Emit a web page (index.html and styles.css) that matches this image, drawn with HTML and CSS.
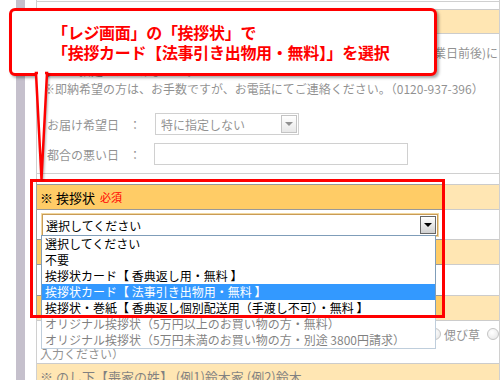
FILE: index.html
```html
<!DOCTYPE html>
<html lang="ja">
<head>
<meta charset="utf-8">
<link rel="stylesheet" href="styles.css">
</head>
<body>
<div class="page">
  <div class="rail"></div>
  <div class="panel">
    <div class="sec0"></div>
    <div class="hd hd0"></div>
    <div class="notes">
      <p class="l1"><span>※お届け日のご指定は、ご注文確定日から約1週間(土日祝を除く5営業日前後)に</span></p>
      <p>までご指定いただけません。</p>
      <p>※即納希望の方は、お手数ですが、お電話にてご連絡ください。（0120-937-396）</p>
      <div class="field field1">
        <span class="lbl">お届け希望日</span><span class="colon">：</span>
        <div class="fsel">特に指定しない<span class="btn btn-f"></span></div>
      </div>
      <div class="field field2">
        <span class="lbl">都合の悪い日</span><span class="colon">：</span>
        <div class="finput"></div>
      </div>
    </div>
    <div class="gap"></div>
    <div class="hd">※ 挨拶状<span class="req">必須</span></div>
    <div class="r1">
      <div class="select">選択してください<span class="btn"></span>
        <ul class="menu">
          <li>選択してください</li>
          <li>不要</li>
          <li>挨拶状カード【 香典返し用・無料 】</li>
          <li class="on">挨拶状カード【 法事引き出物用・無料 】</li>
          <li>挨拶状・巻紙【 香典返し個別配送用（手渡し不可）・無料 】</li>
          <li>オリジナル挨拶状（5万円以上のお買い物の方・無料）</li>
          <li>オリジナル挨拶状（5万円未満のお買い物の方・別途 3800円請求）</li>
        </ul>
      </div>
    </div>
    <div class="hd"></div>
    <div class="r2"></div>
    <div class="hd"></div>
    <div class="r3">
      <div class="radios"><span class="rad"></span><span class="rlbl">偲び草</span><span class="rad"></span></div>
      <p class="l2">入力ください）</p>
    </div>
    <div class="hd">※ のし下【喪家の姓】 (例1)鈴木家 (例2)鈴木</div>
  </div>
</div>
<div class="spot"></div>
<div class="callout">
  <p>「レジ画面」の「挨拶状」で</p>
  <p>「挨拶カード【法事引き出物用・無料】」を選択</p>
</div>
<svg class="tail" width="24" height="116" viewBox="0 0 24 116">
  <polygon class="tri" points="6,5 17,5 11.5,111" />
  <rect x="8" y="3" width="7" height="6" fill="#fff" />
</svg>
</body>
</html>
```

FILE: styles.css
```css
* { box-sizing: border-box; margin: 0; padding: 0; }
html, body { width: 500px; height: 380px; overflow: hidden; background: #fff; }
body {
  position: relative;
  font-family: "Noto Sans CJK JP", "Noto Sans", sans-serif;
  font-size: 12px;
  color: #222;
}
.page { display: flex; height: 380px; }
.rail { width: 9px; margin-left: 16px; background: #8a8098; }
.panel {
  margin-left: 11px;
  width: 464px;
  border-left: 1px solid #a0a0a0;
  border-right: 1px solid #a0a0a0;
  overflow: hidden;
}
.sec0 { height: 2px; border-bottom: 1px solid #a0a0a0; }
.hd {
  height: 26px;
  background: #ffcc66;
  border-top: 1px solid #999;
  border-bottom: 1px solid #999;
  display: flex;
  align-items: center;
  padding-left: 3px;
  font-size: 13px;
  color: #000;
  white-space: nowrap;
}
.hd0 { margin-top: 7px; height: 25px; }
.req { color: #f00; font-size: 11px; margin-left: 5px; }

.notes {
  padding: 10px 0 8px 6px;
  border-bottom: 1px solid #a0a0a0;
}
.notes p { line-height: 18px; white-space: nowrap; }
.notes .l1 { display: flex; justify-content: flex-end; padding-right: 1px; }
.field { display: flex; align-items: center; height: 22px; padding-left: 4px; }
.field1 { margin-top: 15px; }
.field2 { margin-top: 8px; }
.lbl { width: 82px; white-space: nowrap; }
.colon { width: 26px; }
.fsel {
  width: 144px; height: 22px;
  border: 1px solid #a0a0a0;
  display: flex; align-items: center;
  padding-left: 5px;
  background: #fff;
}
.finput {
  width: 254px; height: 22px;
  margin-left: -1px;
  border: 1px solid #a0a0a0;
  background: #fff;
}
.btn {
  margin-left: auto;
  margin-right: 1px;
  width: 16px; height: 18px;
  border: 1px solid #666;
  background: linear-gradient(#fff, #d0d0d0);
  display: flex; align-items: center; justify-content: center;
}
.btn::after {
  content: "";
  border-left: 4px solid transparent;
  border-right: 4px solid transparent;
  border-top: 4px solid #000;
}
.btn-f { border-color: #888; }
.btn-f::after { border-top-color: #222; }

.gap { height: 10px; }
.r1 { height: 29px; padding: 4px 0 0 5px; }
.select {
  position: relative;
  width: 396px; height: 22px;
  border: 1px solid #c89c58;
  box-shadow: 0 0 0 1px #f2d79e;
  display: flex; align-items: center;
  padding-left: 3px;
  color: #000;
  background: #fff;
}
.menu {
  position: absolute;
  left: -2px; top: 20px;
  width: 395px;
  border: 1px solid #7f9db9;
  background: #fff;
  list-style: none;
  z-index: 5;
}
.menu li {
  height: 16px;
  line-height: 16px;
  padding-left: 3px;
  color: #000;
  white-space: nowrap;
}
.menu li.on { background: #3399ff; color: #fff; }

.r2 { height: 30px; }
.r3 { height: 42px; padding-top: 4px; }
.radios { display: flex; justify-content: flex-end; align-items: center; height: 18px; }
.rad {
  width: 12px; height: 12px;
  border-radius: 50%;
  border: 1px solid #888;
  background: radial-gradient(circle at 40% 35%, #fff, #c8c8c8);
}
.rlbl { margin: 0 7px 0 3px; font-size: 12px; }
.r3 .l2 { line-height: 15px; margin-top: 3px; padding-left: 3px; white-space: nowrap; }

.spot {
  position: absolute;
  left: 30px; top: 179px;
  width: 415px; height: 139px;
  border: 3px solid #f00;
  box-shadow: 0 0 0 700px rgba(255, 255, 255, 0.5);
  z-index: 10;
}
.callout {
  position: absolute;
  left: 9px; top: 8px;
  width: 428px; height: 68px;
  border: 3px solid #f00;
  border-radius: 6px;
  background: #fff;
  box-shadow: 2px 2px 3px rgba(0, 0, 0, 0.35);
  z-index: 20;
  padding: 11px 0 0 40px;
  color: #f00;
  font-weight: bold;
  font-size: 16px;
  line-height: 20px;
  letter-spacing: -0.3px;
  white-space: nowrap;
}
.tail { position: absolute; left: 30px; top: 68px; z-index: 21; }
.tri {
  fill: #fff;
  stroke: #f00;
  stroke-width: 2.5;
  stroke-linejoin: miter;
  filter: drop-shadow(1px 1px 1px rgba(0, 0, 0, 0.3));
}
```
